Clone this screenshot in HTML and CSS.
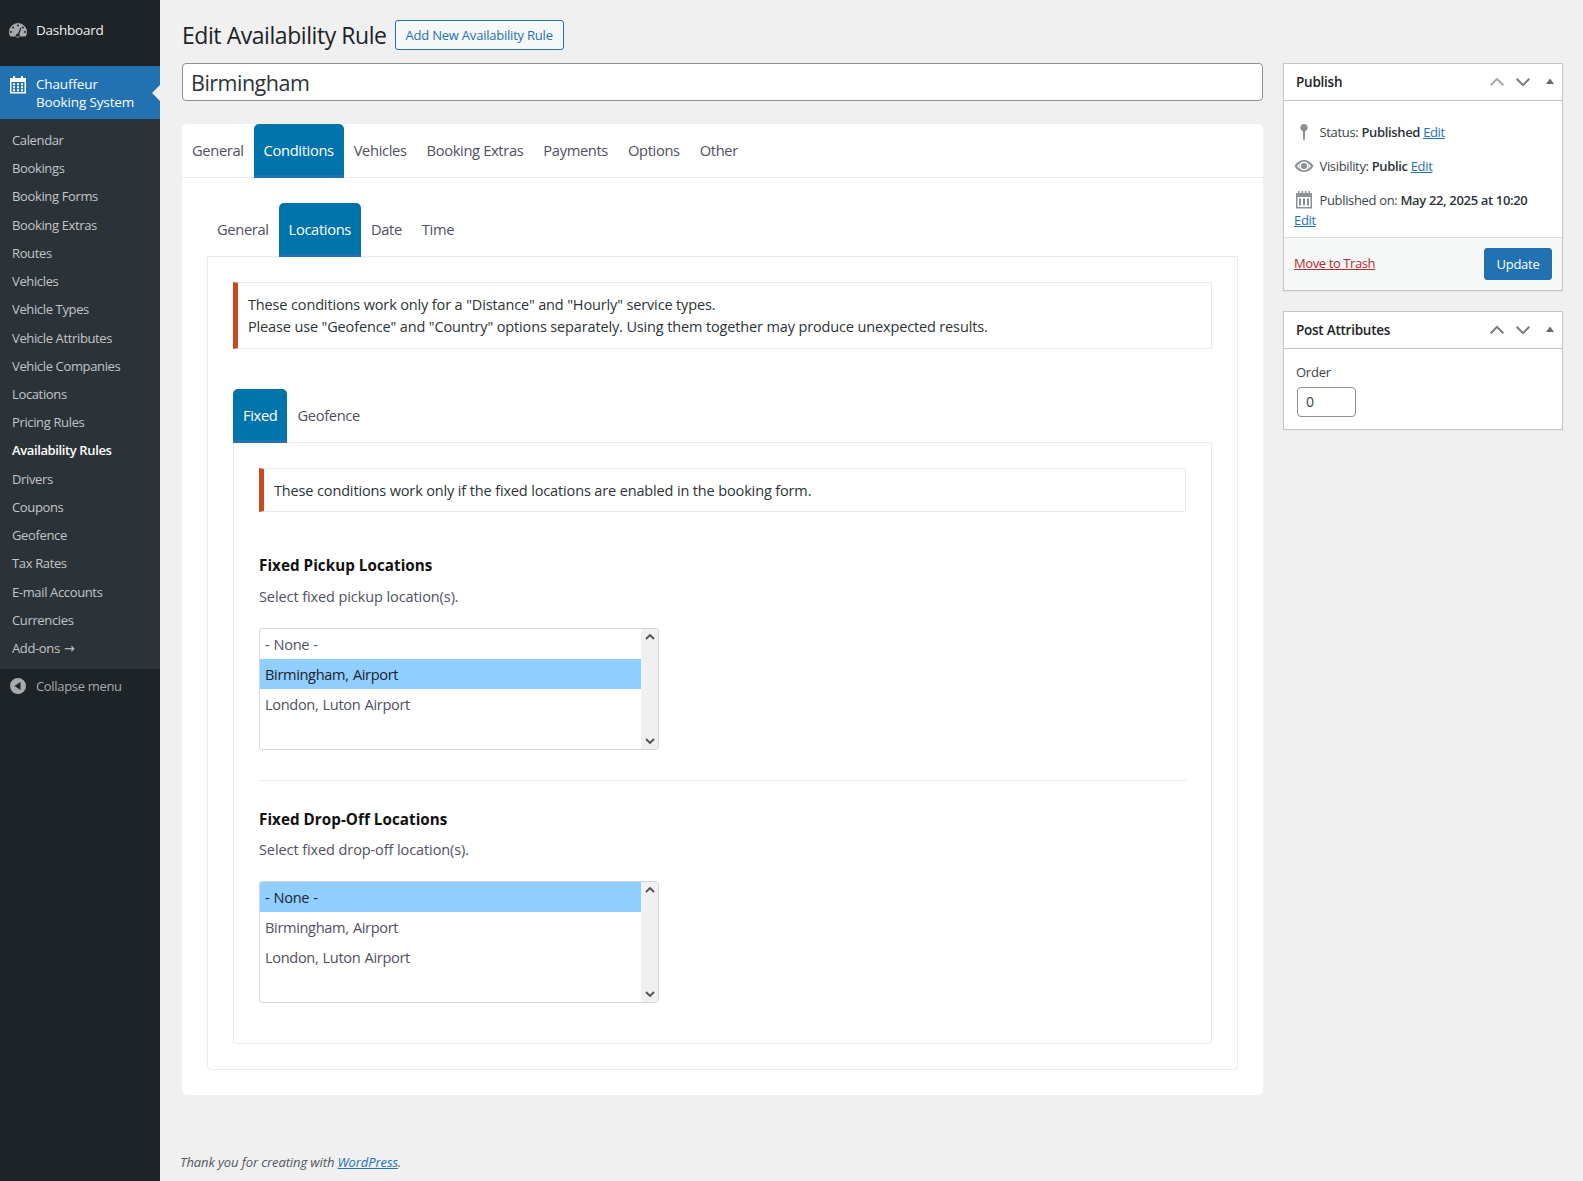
FILE: index.html
```html
<!DOCTYPE html>
<html lang="en">
<head>
<meta charset="utf-8">
<title>Edit Availability Rule</title>
<link rel="stylesheet" href="styles.css">
</head>
<body>
<div class="shell">
  <nav class="sidebar">
    <a class="menu-top dash">
      <svg class="mi" viewBox="0 0 20 20"><path fill="#a7aaad" fill-rule="evenodd" d="M10 3a9 9 0 0 0-9 9c0 1.800.5 3.300 1.300 4.600h15.400A8.900 8.900 0 0 0 19 12a9 9 0 0 0-9-9zM10 4.500a1 1 0 1 1 0 2 1 1 0 0 1 0-2zM5 6.500a1 1 0 1 1 0 2 1 1 0 0 1 0-2zM3 11a1 1 0 1 1 0 2 1 1 0 0 1 0-2zM15 6.500a1 1 0 1 1 0 2 1 1 0 0 1 0-2zM17 11a1 1 0 1 1 0 2 1 1 0 0 1 0-2zM12.300 7.500l1 .4-2 6.500a2 2 0 1 1-2.600-.4 2 2 0 0 1 1.500-.4z"/></svg>
      <span>Dashboard</span>
    </a>
    <a class="menu-current">
      <svg class="mi cal" viewBox="0 0 20 20"><path fill="#fff" fill-rule="evenodd" d="M5 1h2v2h6V1h2v2h3v15.500H2V3h3zM3.500 7v10h13V7zM5 8.300h2v2H5zM9 8.300h2v2H9zM13 8.300h2v2h-2zM5 11.300h2v2H5zM9 11.300h2v2H9zM13 11.300h2v2h-2zM5 14.200h2v2H5zM9 14.200h2v2H9zM13 14.200h2v2h-2z"/></svg>
      <span>Chauffeur<br>Booking System</span>
    </a>
    <ul class="submenu">
      <li>Calendar</li><li>Bookings</li><li>Booking Forms</li><li>Booking Extras</li><li>Routes</li><li>Vehicles</li><li>Vehicle Types</li><li>Vehicle Attributes</li><li>Vehicle Companies</li><li>Locations</li><li>Pricing Rules</li><li class="active">Availability Rules</li><li>Drivers</li><li>Coupons</li><li>Geofence</li><li>Tax Rates</li><li>E-mail Accounts</li><li>Currencies</li><li>Add-ons <span class="arrow">→</span></li>
    </ul>
    <a class="collapse">
      <svg class="mi" viewBox="0 0 20 20"><path fill="#a7aaad" fill-rule="evenodd" d="M10 2a8 8 0 1 1 0 16 8 8 0 0 1 0-16zM12.500 6l-6 4 6 4z"/></svg>
      <span>Collapse menu</span>
    </a>
  </nav>

  <div class="content">
    <div class="columns">
      <main class="main">
        <div class="title-row">
          <h1>Edit Availability Rule</h1>
          <a class="add-new">Add New Availability Rule</a>
        </div>
        <div class="title-input">Birmingham</div>

        <section class="card">
          <div class="tabs top-tabs">
            <a class="tab">General</a><a class="tab on">Conditions</a><a class="tab">Vehicles</a><a class="tab">Booking Extras</a><a class="tab">Payments</a><a class="tab">Options</a><a class="tab">Other</a>
          </div>
          <div class="card-body">
            <div class="tabs">
              <a class="tab">General</a><a class="tab on">Locations</a><a class="tab">Date</a><a class="tab">Time</a>
            </div>
            <div class="panel">
              <div class="notice two-line">These conditions work only for a "Distance" and "Hourly" service types.<br>Please use "Geofence" and "Country" options separately. Using them together may produce unexpected results.</div>
              <div class="tabs third-tabs">
                <a class="tab on">Fixed</a><a class="tab">Geofence</a>
              </div>
              <div class="panel inner">
                <div class="notice">These conditions work only if the fixed locations are enabled in the booking form.</div>
                <h3 class="first-h">Fixed Pickup Locations</h3>
                <p class="desc first-desc">Select fixed pickup location(s).</p>
                <div class="listbox">
                  <ul class="options"><li>- None -</li><li class="sel">Birmingham, Airport</li><li>London, Luton Airport</li></ul>
                  <div class="scroll"><svg viewBox="0 0 10 6"><path d="M1 5l4-4 4 4" fill="none" stroke="#505050" stroke-width="1.800"/></svg><svg viewBox="0 0 10 6"><path d="M1 1l4 4 4-4" fill="none" stroke="#505050" stroke-width="1.800"/></svg></div>
                </div>
                <hr class="sep">
                <h3>Fixed Drop-Off Locations</h3>
                <p class="desc">Select fixed drop-off location(s).</p>
                <div class="listbox">
                  <ul class="options"><li class="sel">- None -</li><li>Birmingham, Airport</li><li>London, Luton Airport</li></ul>
                  <div class="scroll"><svg viewBox="0 0 10 6"><path d="M1 5l4-4 4 4" fill="none" stroke="#505050" stroke-width="1.800"/></svg><svg viewBox="0 0 10 6"><path d="M1 1l4 4 4-4" fill="none" stroke="#505050" stroke-width="1.800"/></svg></div>
                </div>
              </div>
            </div>
          </div>
        </section>
      </main>

      <aside class="side">
        <div class="box">
          <div class="box-head">
            <h2>Publish</h2>
            <svg class="hi" viewBox="0 0 20 20"><path d="M3 13.500L10 6.500l7 7" fill="none" stroke="#a7aaad" stroke-width="2.300"/></svg>
            <svg class="hi" viewBox="0 0 20 20"><path d="M3 6.500L10 13.500 17 6.500" fill="none" stroke="#787c82" stroke-width="2.300"/></svg>
            <svg class="hi tri" viewBox="0 0 20 20"><path d="M10 6.500l4 5.500H6z" fill="#646970"/></svg>
          </div>
          <div class="pub">
            <div class="pub-row"><svg class="pi" viewBox="0 0 20 20"><path fill="#8c8f94" d="M10 2a3.600 3.600 0 0 1 1.200 7L10.800 17.500l-.8 1.500-.8-1.500L8.800 9A3.600 3.600 0 0 1 10 2z"/></svg><span>Status: <b>Published</b> <a>Edit</a></span></div>
            <div class="pub-row"><svg class="pi" viewBox="0 0 20 20"><path fill="#8c8f94" fill-rule="evenodd" d="M10 4c4 0 7.500 2.500 9.500 6-2 3.500-5.500 6-9.500 6S2.500 13.500.5 10c2-3.500 5.500-6 9.500-6zM10 5.500a4.500 4.500 0 1 0 0 9 4.500 4.500 0 0 0 0-9zM3 10c1 1.300 2 2.200 3 3a6 6 0 0 1 0-6c-1 .8-2 1.700-3 3zm14 0c-1-1.300-2-2.200-3-3a6 6 0 0 1 0 6c1-.8 2-1.700 3-3zM10 7a3 3 0 1 1 0 6 3 3 0 0 1 0-6z"/></svg><span>Visibility: <b>Public</b> <a>Edit</a></span></div>
            <div class="pub-row last"><svg class="pi" viewBox="0 0 20 20"><path fill="#8c8f94" fill-rule="evenodd" d="M4 1h1.500v2h2V1H9v2h2V1h1.500v2h2V1H16v2h2v15.500H2V3h2zM3.500 7v10h13V7zM5 8.500h2v7H5zM9 8.500h2v7H9zM13 8.500h2v7h-2z"/></svg><span>Published on: <b>May 22, 2025 at 10:20</b></span></div>
            <a class="pub-edit">Edit</a>
          </div>
          <div class="pub-foot">
            <a class="trash">Move to Trash</a>
            <button class="update" type="button">Update</button>
          </div>
        </div>
        <div class="box">
          <div class="box-head">
            <h2>Post Attributes</h2>
            <svg class="hi" viewBox="0 0 20 20"><path d="M3 13.500L10 6.500l7 7" fill="none" stroke="#787c82" stroke-width="2.300"/></svg>
            <svg class="hi" viewBox="0 0 20 20"><path d="M3 6.500L10 13.500 17 6.500" fill="none" stroke="#787c82" stroke-width="2.300"/></svg>
            <svg class="hi tri" viewBox="0 0 20 20"><path d="M10 6.500l4 5.500H6z" fill="#646970"/></svg>
          </div>
          <div class="attr">
            <div class="attr-label">Order</div>
            <div class="order">0</div>
          </div>
        </div>
      </aside>
    </div>
    <footer class="foot">Thank you for creating with <a>WordPress</a>.</footer>
  </div>
</div>
</body>
</html>
```
FILE: styles.css
```css
* { box-sizing: border-box; }
html, body { margin: 0; padding: 0; }
body {
  background: #f0f0f1;
  color: #3c434a;
  font-family: "Open Sans", "Noto Sans", sans-serif;
  font-size: 13px;
  letter-spacing: -0.25px;
}
a { color: #2271b1; text-decoration: underline; }
ul { list-style: none; margin: 0; padding: 0; }
.shell { display: flex; min-height: 1181px; }

/* sidebar */
.sidebar {
  width: 160px;
  flex: none;
  background: #1d2327;
  display: flex;
  flex-direction: column;
}
.menu-top {
  display: flex;
  align-items: center;
  height: 34px;
  margin-top: 13px;
  margin-bottom: 19px;
  padding-left: 8px;
  color: #f0f0f1;
  text-decoration: none;
  font-size: 13.500px;
}
.mi { width: 20px; height: 20px; flex: none; margin-right: 8px; }
.menu-current {
  position: relative;
  display: flex;
  align-items: flex-start;
  height: 53px;
  padding: 9px 0 0 8px;
  background: #2271b1;
  color: #fff;
  text-decoration: none;
  font-size: 13.500px;
  line-height: 18px;
  letter-spacing: -0.14px;
}
.menu-current .cal { margin-top: 0; margin-right: 8px; }
.menu-current::after {
  content: "";
  position: absolute;
  right: 0;
  top: 19px;
  border: 8px solid transparent;
  border-right-color: #f0f0f1;
  border-left-width: 0;
}
.submenu {
  background: #2c3338;
  padding: 7px 0 6.500px;
}
.submenu li {
  height: 28.220px;
  padding-left: 12px;
  line-height: 28px;
  color: #c3c4c7;
  font-size: 13px;
  letter-spacing: -0.36px;
}
.submenu .active { color: #fff; font-weight: 600; letter-spacing: -0.38px; }
.arrow { font-family: "DejaVu Sans", sans-serif; font-size: 13px; letter-spacing: 0; margin-left: 1px; }
.collapse {
  display: flex;
  align-items: center;
  height: 34px;
  padding-left: 8px;
  color: #a7aaad;
  text-decoration: none;
  letter-spacing: -0.32px;
}

/* content */
.content {
  flex: 1;
  display: flex;
  flex-direction: column;
  padding: 0 20px 0 22px;
  min-width: 0;
}
.columns { display: flex; gap: 20px; flex: 1; align-items: flex-start; }
.main { width: 1081px; flex: none; }
.title-row {
  display: flex;
  align-items: center;
  height: 63px;
  padding-top: 7px;
}
h1 {
  margin: 0 8px 0 0;
  font-size: 23px;
  font-weight: 400;
  color: #1d2327;
  letter-spacing: -0.44px;
}
.add-new {
  display: block;
  border: 1px solid #2271b1;
  border-radius: 3px;
  height: 30px;
  padding: 0 10px;
  line-height: 28px;
  text-decoration: none;
  background: #f6f7f7;
  letter-spacing: -0.22px;
}
.title-input {
  height: 38px;
  background: #fff;
  border: 1px solid #8c8f94;
  border-radius: 4px;
  padding: 0 8px;
  line-height: 37px;
  font-size: 21.500px;
  color: #2c3338;
  letter-spacing: -0.5px;
}

/* card and tabs */
.card {
  margin-top: 23px;
  background: #fff;
  border-radius: 5px;
  height: 971px;
}
.tabs { display: flex; }
.top-tabs { border-bottom: 1px solid #e8e8ef; }
.tab {
  display: block;
  height: 54px;
  padding: 0 10px;
  line-height: 53px;
  font-size: 14.700px;
  letter-spacing: -0.35px;
  color: #50505f;
  text-decoration: none;
  border-radius: 5px 5px 0 0;
  margin-bottom: -1px;
}
.tab.on {
  color: #fff;
  background: #0073aa;
  border-bottom: 3px solid #2271b1;
}
.card-body { padding: 25px 25px 0; }
.panel {
  background: #fff;
  border: 1px solid #e8e8ef;
  border-radius: 0 0 4px 4px;
  padding: 25px;
}
.card-body > .panel { height: 814px; }
.notice {
  background: #fff;
  border: 1px solid #e8e8ef;
  border-left: 5px solid #c64b1f;
  padding: 11px 10px 9px;
  font-size: 14.500px;
  line-height: 22px;
  letter-spacing: -0.14px;
  color: #2c3338;
}
.two-line { padding-bottom: 10px; }
.third-tabs { margin-top: 40px; }
.inner { height: 602px; }
h3 {
  margin: 0;
  font-size: 15.200px;
  line-height: 20px;
  font-weight: 700;
  color: #111;
  letter-spacing: 0.05px;
}
.first-h { margin-top: 43px; }
.desc {
  margin: 11px 0 0;
  line-height: 20px;
  font-size: 14.500px;
  letter-spacing: -0.09px;
  color: #50505f;
}
.first-desc { margin-top: 11.500px; }
.listbox {
  display: flex;
  width: 400px;
  height: 122px;
  margin-top: 21px;
  border: 1px solid #d5d5e2;
  border-radius: 3px;
  background: #fff;
  overflow: hidden;
}
.options { flex: 1; }
.options li {
  height: 30px;
  padding-left: 5px;
  line-height: 30px;
  font-size: 14.600px;
  letter-spacing: -0.35px;
  word-spacing: 0.8px;
  color: #50505f;
}
.options .sel { background: #8fceff; color: #1d2327; }
.scroll {
  width: 17px;
  background: #f0f0f0;
  display: flex;
  flex-direction: column;
  justify-content: space-between;
  align-items: center;
  padding: 5px 0;
}
.scroll svg { width: 10px; height: 6px; }
.sep { margin: 30px 0 28px; border: 0; border-top: 1px solid #e8e8ef; }

/* side boxes */
.side { width: 280px; flex: none; padding-top: 63px; }
.box {
  background: #fff;
  border: 1px solid #c3c4c7;
  box-shadow: 0 1px 1px rgba(0,0,0,.04);
  margin-bottom: 20px;
}
.box-head {
  display: flex;
  align-items: center;
  height: 37px;
  padding: 0 4px 0 12px;
  border-bottom: 1px solid #c3c4c7;
}
.box-head h2 {
  margin: 0 auto 0 0;
  font-size: 13.500px;
  font-weight: 600;
  color: #1d2327;
}
.hi { width: 18px; height: 18px; margin-left: 8px; }
.hi.tri { width: 20px; height: 20px; margin-left: 8px; margin-right: -2px; }
.pub { padding: 14px 10px 8px; letter-spacing: -0.34px; }
.pub-row { display: flex; align-items: center; height: 34px; line-height: 20px; }
.pub-row.last { height: 30px; padding-top: 4px; }
.pi { width: 20px; height: 20px; margin-right: 5.500px; flex: none; }
.pub b { font-weight: 600; color: #2c3338; }
.pub-edit { display: block; line-height: 17px; margin-top: -1px; }
.pub-foot {
  display: flex;
  align-items: center;
  justify-content: space-between;
  height: 53px;
  padding: 0 10px;
  background: #f6f7f7;
  border-top: 1px solid #dcdcde;
}
.trash { color: #b32d2e; letter-spacing: -0.4px; padding-bottom: 2px; }
.update {
  height: 32px;
  width: 68px;
  background: #2271b1;
  border: 1px solid #2271b1;
  border-radius: 3px;
  color: #fff;
  font: inherit;
  letter-spacing: inherit;
}
.attr { padding: 14px 12px 12px; }
.attr-label { line-height: 18px; font-weight: 400; }
.order {
  width: 59px;
  height: 30px;
  margin: 6px 0 0 1px;
  padding-left: 8px;
  line-height: 28px;
  font-size: 14px;
  border: 1px solid #8c8f94;
  border-radius: 4px;
}
.foot {
  padding-bottom: 9px;
  margin-left: -2px;
  font-style: italic;
  font-size: 13px;
  line-height: 20px;
  letter-spacing: -0.1px;
  color: #50575e;
}
```
